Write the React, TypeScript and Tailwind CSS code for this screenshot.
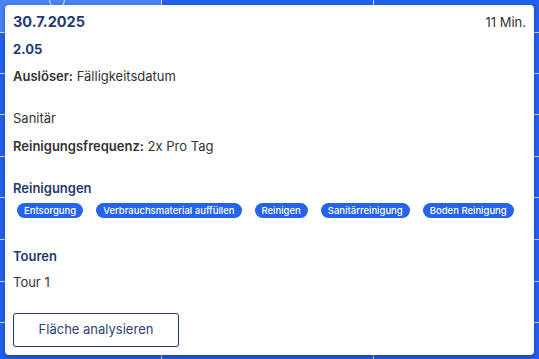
import React from "react";

const pills = ["Entsorgung", "Verbrauchsmaterial auffüllen", "Reinigen", "Sanitärreinigung", "Boden Reinigung"];

function Row({ h, first }: { h: string; first?: boolean }) {
  return (
    <div className={`flex ${h} border-b border-[#c9d3ea]`}>
      <div className={`w-[162px] border-r border-[#c9d3ea] ${first ? "bg-[#4a82f2]" : ""}`} />
      <div className="w-[212px] border-r border-[#c9d3ea]" />
      <div className="flex-1" />
    </div>
  );
}

export default function App() {
  return (
    <div
      className="relative h-[359px] w-[539px] overflow-hidden bg-[#2360ea]"
      style={{ fontFamily: "Inter, 'Noto Sans', sans-serif" }}
    >
      <div className="flex flex-col">
        <Row h="h-[33px]" first />
        <Row h="h-[41px]" />
        <Row h="h-[41px]" />
        <Row h="h-[42px]" />
        <Row h="h-[41px]" />
        <Row h="h-[42px]" />
        <Row h="h-[42px]" />
        <Row h="h-[41px]" />
        <Row h="h-[41px]" />
      </div>
      <div className="absolute left-[49px] top-[-8px] h-[16px] w-[16px] rounded-full border border-white/80" />

      <div className="absolute left-[5px] top-[5px] flex h-[350px] w-[529px] flex-col rounded-[4px] bg-white px-2 pt-[7px] shadow-[0_2px_4px_rgba(0,0,40,0.35)]">
        <div className="flex items-center justify-between">
          <span className="text-[14.5px] font-bold leading-[20px] text-[#1f3a6f]">30.7.2025</span>
          <span className="text-[13px] leading-[20px] text-[#333]">11 Min.</span>
        </div>
        <div className="mt-[7px] text-[13px] font-bold leading-[20px] text-[#1f3a6f]">2.05</div>
        <div className="mt-[7px] text-[13px] leading-[20px] text-[#333]">
          <span className="font-semibold">Auslöser:</span> Fälligkeitsdatum
        </div>
        <div className="mt-[22px] text-[13px] leading-[20px] text-[#333]">Sanitär</div>
        <div className="mt-[8px] text-[13px] leading-[20px] text-[#333]">
          <span className="font-semibold">Reinigungsfrequenz:</span> 2x Pro Tag
        </div>
        <div className="mt-[22px] text-[13px] font-semibold leading-[20px] text-[#1f3a6f]">Reinigungen</div>
        <div className="mt-[5px] flex gap-[13px] pl-[4px]">
          {pills.map((p) => (
            <span
              key={p}
              className="flex h-[15px] flex-none items-center whitespace-nowrap rounded-full bg-[#2563eb] px-[7px] text-[9.5px] font-medium leading-none text-white"
            >
              {p}
            </span>
          ))}
        </div>
        <div className="mt-[28px] text-[13px] font-semibold leading-[20px] text-[#1f3a6f]">Touren</div>
        <div className="mt-[6px] text-[13px] leading-[20px] text-[#333]">Tour 1</div>
        <div className="mt-[21px]">
          <button className="flex h-[34px] w-[166px] items-center justify-center rounded-[3px] border border-[#1f3a6f] bg-white text-[13px] text-[#2d4275]">
            Fläche analysieren
          </button>
        </div>
      </div>
    </div>
  );
}
